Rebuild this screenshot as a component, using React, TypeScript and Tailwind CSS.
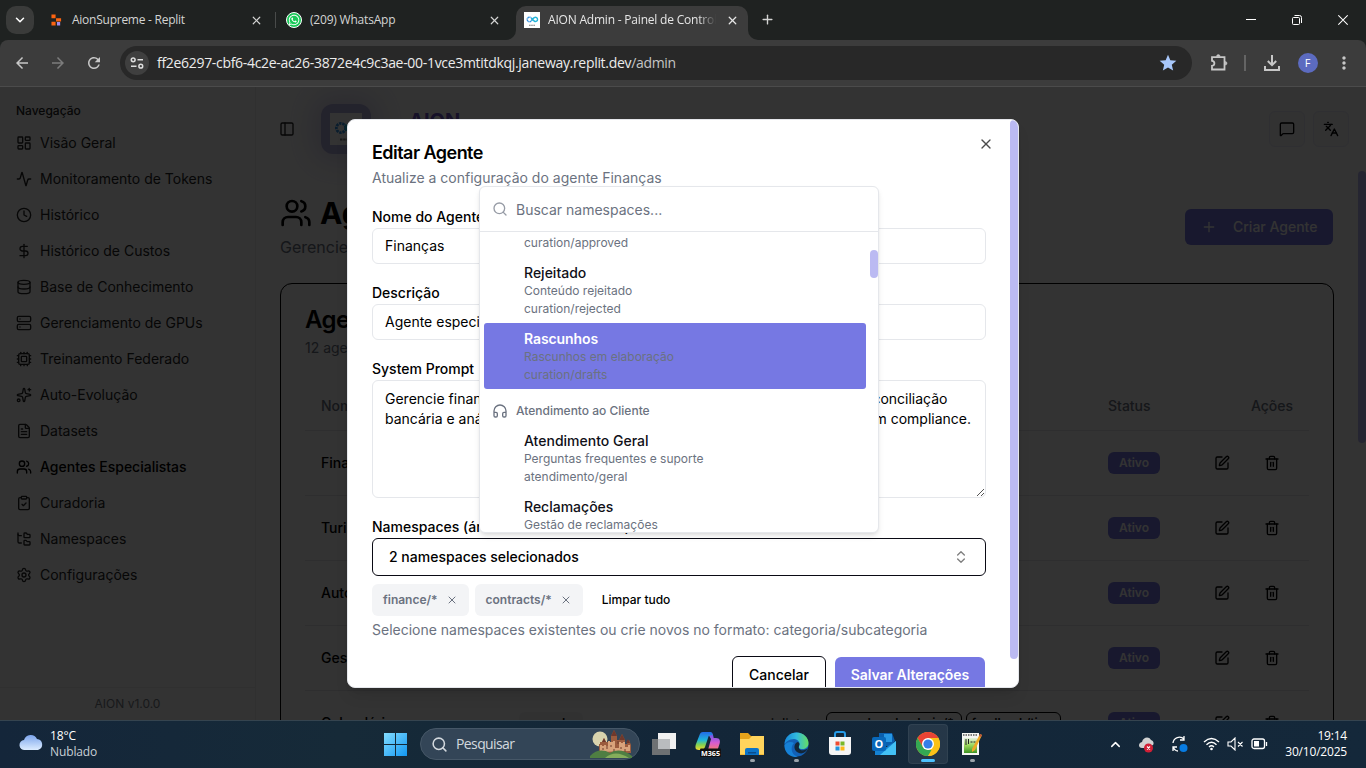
import React from "react";
import {
  Activity, ChevronDown, ChevronsUpDown, ChevronUp, ClipboardCheck, Clock, Cpu, Database, DollarSign,
  FileText, FolderTree, Headphones, Languages, LayoutDashboard, MessageSquare, PanelLeft, Plus, Search,
  Server, Settings, Sparkles, SquarePen, Trash2, Users, X,
} from "lucide-react";
import { FaWhatsapp } from "react-icons/fa";
import { MdArrowBack, MdArrowForward, MdRefresh, MdStar, MdMoreVert } from "react-icons/md";

const nav = [
  { icon: LayoutDashboard, label: "Visão Geral" },
  { icon: Activity, label: "Monitoramento de Tokens" },
  { icon: Clock, label: "Histórico" },
  { icon: DollarSign, label: "Histórico de Custos" },
  { icon: Database, label: "Base de Conhecimento" },
  { icon: Server, label: "Gerenciamento de GPUs" },
  { icon: Cpu, label: "Treinamento Federado" },
  { icon: Sparkles, label: "Auto-Evolução" },
  { icon: FileText, label: "Datasets" },
  { icon: Users, label: "Agentes Especialistas", active: true },
  { icon: ClipboardCheck, label: "Curadoria" },
  { icon: FolderTree, label: "Namespaces" },
  { icon: Settings, label: "Configurações" },
];

function AionMark({ className }: { className: string }) {
  return (
    <svg viewBox="0 0 32 32" className={className}>
      <rect width="32" height="32" fill="#fff" />
      <g fill="none" strokeWidth="2.8">
        <circle cx="11" cy="15" r="4.6" stroke="#2f8fe0" strokeDasharray="2.4 .8" />
        <path d="M15 12c3 2 3 5 6 6.500a4.200 4.200 0 1 0 0-7.500c-3 1-4 5-6 6.500" stroke="#25b5d8" />
      </g>
      <path d="M10 26.500h12" stroke="#777" strokeWidth="2.200" strokeDasharray="2.500 .7" />
    </svg>
  );
}

function TabStrip() {
  return (
    <div className="flex h-10 shrink-0 items-start bg-[#1f2221] text-[12px] text-[#d3d4d3]">
      <div className="ml-1.5 mt-1.5 flex h-7 w-7 items-center justify-center rounded-[10px] bg-[#3a3b3a]">
        <ChevronDown size={14} strokeWidth={2.6} className="text-white" />
      </div>
      <div className="ml-[17px] flex h-10 w-[224px] items-center">
        <svg viewBox="0 0 12 12" className="h-3 w-[11px]">
          <path d="M.5 0H5v4H.5zM5.500 4H11v3.500H5.500zM.5 8H5v4H.5z" fill="#fb6411" />
          <path d="M6.500 8.200H10V12H6.500z" fill="#9d8bea" />
        </svg>
        <span className="ml-[10px] tracking-[-0.25px]">AionSupreme - Replit</span>
        <X size={13} strokeWidth={2.2} className="ml-auto mr-[12px]" />
      </div>
      <div className="mt-3 h-4 w-px bg-[#494b4a]" />
      <div className="ml-[10px] flex h-10 w-[220px] items-center">
        <span className="flex h-4 w-4 items-center justify-center rounded-full border border-white bg-[#18c957] text-white">
          <FaWhatsapp size={12} />
        </span>
        <span className="ml-2 tracking-[-0.2px]">(209) WhatsApp</span>
        <X size={13} strokeWidth={2.2} className="ml-auto mr-[5px]" />
      </div>
      <div className="h-10 w-[10px] bg-[#3c3c3c]">
        <div className="h-10 w-full rounded-br-[10px] bg-[#1f2221]" />
      </div>
      <div className="h-10 w-[232px]">
        <div className="mt-1.5 flex h-[34px] items-center rounded-t-[10px] bg-[#3c3c3c] pb-[6px] pl-2 text-[#e6e6e6]">
          <AionMark className="h-4 w-4" />
          <span className="ml-2 w-[168px] overflow-hidden whitespace-nowrap tracking-[-0.2px] [mask-image:linear-gradient(to_right,black_150px,transparent_168px)]">
            AION Admin - Painel de Controle
          </span>
          <X size={13} strokeWidth={2.4} className="ml-[10px]" />
        </div>
      </div>
      <div className="h-10 w-[10px] bg-[#3c3c3c]">
        <div className="h-10 w-full rounded-bl-[10px] bg-[#1f2221]" />
      </div>
      <Plus size={15} strokeWidth={2.2} className="ml-[2px] mt-[12px]" />
      <div className="ml-auto mt-[14px] flex items-center gap-[36px] pr-[18px] text-white">
        <svg width="10" height="12"><path d="M0 5.500h10" stroke="#fff" /></svg>
        <svg width="10" height="12" fill="none" stroke="#fff">
          <rect x=".5" y="3.500" width="7" height="7" rx="1" />
          <path d="M2.500 1.500h5a2 2 0 0 1 2 2v5.500" />
        </svg>
        <svg width="10" height="12"><path d="M.3 1.300l9.400 9.400M9.700 1.300L.3 10.700" stroke="#fff" strokeWidth="1.200" /></svg>
      </div>
    </div>
  );
}

function Toolbar() {
  return (
    <div className="bg-[#1f2221]">
      <div className="flex h-[47px] items-center rounded-t-[8px] border-b border-[#4b4b4b] bg-[#3c3c3c] text-[#c7c7c7]">
        <div className="flex w-[120px] gap-[18px] pl-[13px]">
          <MdArrowBack size={18} />
          <MdArrowForward size={18} className="text-[#7c7c7c]" />
          <MdRefresh size={18} />
        </div>
        <div className="flex h-[34px] w-[1072px] items-center rounded-full bg-[#282828] pl-[5px] pr-[14px]">
          <div className="flex h-6 w-6 items-center justify-center rounded-full bg-[#3f3f3f]">
            <svg width="14" height="12" fill="none" stroke="#dedede" strokeWidth="1.500">
              <circle cx="3.200" cy="2.800" r="1.900" /><path d="M7.500 2.800H13M1 9.200h5.500" /><circle cx="10.800" cy="9.200" r="1.900" />
            </svg>
          </div>
          <span className="ml-2 whitespace-nowrap pb-[2px] text-[14px] tracking-[-0.31px] text-[#ececec]">
            ff2e6297-cbf6-4c2e-ac26-3872e4c9c3ae-00-1vce3mtitdkqj.janeway.replit.dev<span className="text-[#c5c5c5]">/admin</span>
          </span>
          <MdStar size={20} className="ml-auto text-[#a8c7fa]" />
        </div>
        <svg width="18" height="18" className="ml-[18px]" fill="none" stroke="currentColor" strokeWidth="1.800">
          <path d="M2 3.200h12.500v12.300H2v-3.700c3.200-.3 3.200-4.700 0-5z" />
          <path d="M6.500 2.400a1.800 1.800 0 0 1 3.600 0zM15.200 7.500a1.800 1.800 0 0 1 0 3.600z" fill="currentColor" strokeWidth=".5" />
        </svg>
        <div className="ml-[16px] h-4 w-[1.500px] bg-[#646464]" />
        <svg width="16" height="16" fill="none" stroke="currentColor" strokeWidth="2" className="ml-[18px]">
          <path d="M8 0v10M3.800 6L8 10.200 12.200 6M1 11v4h14v-4" />
        </svg>
        <div className="ml-[18px] flex h-5 w-5 items-center justify-center rounded-full bg-[#5c6bc0] text-[11px] text-white">F</div>
        <MdMoreVert size={20} className="ml-[16px]" />
      </div>
    </div>
  );
}

function Sidebar() {
  return (
    <div className="flex w-64 shrink-0 flex-col border-r border-[#ededed] bg-[#fdfdfd]">
      <div className="flex-1 pt-4">
        <div className="pl-4 text-[12px] leading-4 font-medium text-[#252525]">Navegação</div>
        <div className="mt-2 flex flex-col gap-1">
          {nav.map(({ icon: Icon, label, active }) => (
            <div key={label} className={active ? "flex h-8 items-center gap-2 pl-4 pb-px text-[14px] leading-5 font-medium text-black" : "flex h-8 items-center gap-2 pl-4 pb-px text-[14px] leading-5 text-[#252525]"}>
              <Icon size={16} />
              <span>{label}</span>
            </div>
          ))}
        </div>
      </div>
      <div className="flex h-[33px] items-center justify-center border-t border-[#ededed] text-[12px] text-[#777d88]">AION v1.0.0</div>
    </div>
  );
}

function Actions() {
  return (
    <div className="flex flex-1 items-center justify-end pr-3 text-black">
      <div className="flex w-[50px] justify-center"><SquarePen size={16} /></div>
      <div className="flex w-[50px] justify-center"><Trash2 size={16} /></div>
    </div>
  );
}

const agents = ["Finanças", "Turismo", "Automação", "Gestão", "Calendário"];

function Main() {
  return (
    <div className="flex min-w-0 flex-1 bg-[#fdfdfd]">
      <div className="min-w-0 flex-1 pl-6 pr-6">
        <div className="flex h-[84px] items-center">
          <PanelLeft size={16} className="ml-[-1px] text-[#202020]" />
          <div className="ml-[26px] flex h-[50px] w-[50px] items-center justify-center rounded-xl bg-[#b1aedb] shadow-[0_0_26px_8px_rgba(110,100,200,0.25)]">
            <AionMark className="h-8 w-8" />
          </div>
          <span className="ml-[38px] mt-[-16px] text-[20px] font-bold text-[#6e55c8]">AION</span>
          <div className="ml-auto mr-[-15px] flex gap-2 text-black">
            <div className="flex h-9 w-9 items-center justify-center rounded-md border border-[#ebebf7] bg-[#f7f7fb]"><MessageSquare size={16} /></div>
            <div className="flex h-9 w-9 items-center justify-center rounded-md border border-[#ebebf7] bg-[#f7f7fb]"><Languages size={16} /></div>
          </div>
        </div>
        <div className="mt-[22px] flex items-center">
          <div>
            <div className="flex h-10 items-center gap-2 text-[30px] leading-9 font-bold text-black">
              <Users size={32} /> Agentes Especialistas
            </div>
            <div className="mt-0.5 mb-0.5 text-[16px] leading-6 text-[#6b7280]">Gerencie os agentes especializados</div>
          </div>
          <div className="ml-auto mr-px mb-px flex h-9 w-[148px] items-center rounded-md bg-[#7778e3] pl-4 text-[14px] font-medium text-white">
            <Plus size={16} /><span className="ml-4">Criar Agente</span>
          </div>
        </div>
        <div className="mt-[22px] h-[700px] rounded-xl border border-black px-6 pt-6">
          <div className="text-[24px] leading-6 font-semibold tracking-tight text-black">Agentes Disponíveis</div>
          <div className="mt-1.5 text-[14px] leading-5 text-[#6b7280]">12 agentes cadastrados</div>
          <div className="mt-6 flex h-[49px] items-center border-b border-[#e5e7eb] px-4 pb-px text-[14px] leading-5 font-medium text-[#6b7280]">
            <span className="w-[787px]">Nome</span><span>Status</span><span className="ml-auto">Ações</span>
          </div>
          {agents.map((name, i) => (
            <div key={name} className="flex h-[65px] items-center border-b border-[#e5e7eb] pl-4 text-[14px] font-medium text-black">
              <span className="w-[198px] shrink-0 pb-px leading-5">{name}</span>
              <div className="flex w-[589px] shrink-0 items-center gap-1 text-[12px] font-semibold">
                {i === 4 && (
                  <>
                    <span className="flex h-[22px] w-[64px] items-center rounded-md bg-[#f3f4f6] px-2.5">agenda</span>
                    <span className="ml-[132px] w-[101px] text-center text-[14px] font-normal">especialista</span>
                    <span className="ml-0.5 flex h-[22px] w-[136px] shrink-0 items-center justify-center rounded-md border border-black">agenda.calendario/*</span>
                    <span className="flex h-[22px] w-[95px] shrink-0 items-center justify-center rounded-md border border-black">feedback/time</span>
                  </>
                )}
              </div>
              <span className="flex h-[22px] w-[52px] shrink-0 items-center justify-center rounded-md bg-[#7778e3] text-[12px] font-semibold text-white">Ativo</span>
              <Actions />
            </div>
          ))}
        </div>
      </div>
      <div className="w-2 pt-[84px]"><div className="h-[272px] rounded-full bg-[#bbbaf2]" /></div>
    </div>
  );
}

function Field({ label, value }: { label: string; value: string }) {
  return (
    <div>
      <div className="text-[14px] leading-[14px] font-medium">{label}</div>
      <div className="mt-1 flex h-9 items-center rounded-md border border-[#e5e7eb] px-3 pb-px text-[14px] leading-5">{value}</div>
    </div>
  );
}

function Chip({ text }: { text: string }) {
  return (
    <span className="flex h-8 items-center rounded-md bg-[#f3f4f6] pl-[11px] pr-[11px] text-[12px] font-semibold text-[#6b7280]">
      {text}<X size={12} className="ml-2" />
    </span>
  );
}

function Option({ title, text, path, active }: { title: string; text: string; path: string; active?: boolean }) {
  return (
    <div className={active ? "h-[66px] shrink-0 rounded-[3px] bg-[#7678e3] py-1.5 pl-10 text-[12px] leading-4 text-[#6b7280]" : "h-[66px] shrink-0 rounded-[3px] py-1.5 pl-10 text-[12px] leading-4 text-[#6b7280]"}>
      <div className={active ? "text-[14px] leading-5 font-semibold tracking-[-0.1px] text-white" : "text-[14px] leading-5 font-medium text-[#101018]"}>{title}</div>
      <div>{text}</div>
      <div className="mt-0.5">{path}</div>
    </div>
  );
}

function NamespacePopover() {
  return (
    <div className="absolute left-[479px] top-[99px] flex h-[347px] w-[400px] flex-col overflow-hidden rounded-md border border-[#e5e7eb] bg-white shadow-md">
      <div className="flex h-[45px] shrink-0 items-center border-b border-[#e5e7eb] pl-3 pt-px text-[14px] text-[#6b7280]">
        <Search size={16} className="mr-2 mt-[-2px] opacity-70" />Buscar namespaces...
      </div>
      <div className="flex min-h-0 flex-1 overflow-hidden">
        <div className="flex min-w-0 flex-1 flex-col px-1">
          <div className="mt-[-41px] flex flex-col">
            <Option title="Aprovado" text="Conteúdo aprovado" path="curation/approved" />
            <Option title="Rejeitado" text="Conteúdo rejeitado" path="curation/rejected" />
            <Option title="Rascunhos" text="Rascunhos em elaboração" path="curation/drafts" active />
            <div className="mt-2 flex h-7 items-center gap-2 pl-2 text-[12px] font-medium text-[#6b7280]">
              <Headphones size={16} />Atendimento ao Cliente
            </div>
            <Option title="Atendimento Geral" text="Perguntas frequentes e suporte" path="atendimento/geral" />
            <Option title="Reclamações" text="Gestão de reclamações" path="atendimento/reclamacoes" />
          </div>
        </div>
        <div className="w-2 pt-[18px]"><div className="h-7 rounded-full bg-[#bbbaf2]" /></div>
      </div>
    </div>
  );
}

function EditDialog() {
  return (
    <div className="absolute left-[347px] top-[32px] flex h-[569px] w-[672px] overflow-hidden rounded-lg border border-[#e5e7eb] bg-white text-black shadow-lg">
      <div className="min-w-0 flex-1 px-6 pt-6">
        <div className="text-[18px] leading-[18px] font-semibold tracking-[-0.54px]">Editar Agente</div>
        <div className="mt-1.5 text-[14px] leading-5 text-[#6b7280]">Atualize a configuração do agente Finanças</div>
        <div className="mt-[22px] flex flex-col gap-[22px]">
          <Field label="Nome do Agente" value="Finanças" />
          <Field label="Descrição" value="Agente especializado em finanças" />
          <div>
            <div className="text-[14px] leading-[14px] font-medium">System Prompt</div>
            <div className="relative mt-1 flex h-[118px] justify-between rounded-md border border-[#e5e7eb] px-3 py-2 text-[14px] leading-5">
              <div>Gerencie finanças,<br />bancária e análise</div>
              <div className="pr-[2px]"><div className="ml-[-6px]">e conciliação</div><div>em compliance.</div></div>
              <svg width="9" height="9" className="absolute right-0 bottom-0" stroke="#555" strokeWidth="1"><path d="M1 8L8 1M5 8l3-3" /></svg>
            </div>
          </div>
          <div>
            <div className="text-[14px] leading-[14px] font-medium">Namespaces (áreas de conhecimento)</div>
            <div className="mt-1 flex h-[38px] items-center justify-between rounded-md border border-[#0a0a14] px-4 text-[14px] leading-5 font-medium">
              <span>2 namespaces selecionados</span><ChevronsUpDown size={16} className="opacity-50" />
            </div>
            <div className="mt-2 flex items-center gap-1.5 text-[12px] font-medium">
              <Chip text="finance/*" /><Chip text="contracts/*" /><span className="ml-[13px]">Limpar tudo</span>
            </div>
            <div className="mt-1 text-[14px] leading-5 text-[#6b7280]">Selecione namespaces existentes ou crie novos no formato: categoria/subcategoria</div>
          </div>
        </div>
        <div className="mt-4 flex justify-end gap-[9px] text-[14px] leading-5 font-medium">
          <div className="flex h-[38px] w-[94px] items-center justify-center rounded-md border border-[#0a0a14]">Cancelar</div>
          <div className="mr-px mt-px flex h-9 w-[150px] items-center justify-center rounded-md bg-[#7678e3] font-semibold tracking-[-0.06px] text-white">Salvar Alterações</div>
        </div>
      </div>
      <X size={16} className="absolute right-[24px] top-4 opacity-70" />
      <div className="w-2"><div className="h-[539px] rounded-full bg-[#bbbaf2]" /></div>
    </div>
  );
}

function AppIcon({ children, mark }: { children: React.ReactNode; mark?: "idle" | "active" }) {
  return (
    <div className={mark === "active" ? "relative flex h-10 w-10 items-center justify-center rounded-[4px] border border-white/5 bg-white/8" : "relative flex h-10 w-10 items-center justify-center"}>
      {children}
      {mark === "idle" && <div className="absolute bottom-0.5 h-[3px] w-[5px] rounded-full bg-[#9aa3ab]" />}
      {mark === "active" && <div className="absolute bottom-px h-[3px] w-3.5 rounded-full bg-[#4cc2ff]" />}
    </div>
  );
}

function Castle() {
  return (
    <svg width="43" height="28" viewBox="0 0 43 28">
      <circle cx="10" cy="9" r="7.500" fill="#d9d3ad" />
      <path d="M9 23v-9h1v-2h2l2-4 2 4h2v1h3V6l3-6 3 6v4h2l3-6 3 6v4h2l2-4 2 5v8z" fill="#9b5c3e" />
      <path d="M10 22v-7h2v1h2v-1h2v1h2v-5h2v1h3v-1h2v7h4v-6h2v1h2v-1h2v5h3v-2h2v6z" fill="#d8a37b" />
      <path d="M12 12l2-4 2 4zM21 6l3-6 3 6zM29 10l3-6 3 6zM36 13l2-4 2 4z" fill="#6f382b" />
      <path d="M13 18v2m4-4v3m4-4v2m3 2v3m4-11v3m3 3v2m4 0v3" stroke="#6f3d2d" />
      <path d="M0 26q9-9 20-3 10-6 22 3v2H0z" fill="#4f7e42" />
      <path d="M15 28q10-9 24 0z" fill="#85ad5b" />
    </svg>
  );
}

function Taskbar() {
  return (
    <div className="relative flex h-12 shrink-0 items-center border-t border-[#35444f] bg-[linear-gradient(90deg,#14263a,#162a38_25%,#132638_50%,#14283a)] text-[12px] text-white">
      <svg width="25" height="17" viewBox="0 0 25 17" className="ml-[19px] mt-[-4px]">
        <defs><linearGradient id="cl" y2="1" x2="0"><stop stopColor="#7ca5ec" /><stop offset="1" stopColor="#dcecff" /></linearGradient></defs>
        <path d="M6 16a5 5 0 0 1-1-10 7 7 0 0 1 13-1 5.600 5.600 0 0 1 1 11z" fill="url(#cl)" />
      </svg>
      <div className="ml-[6px] mt-[-1px] w-[334px] leading-4 tracking-[-0.12px]"><div>18°C</div><div className="text-[#c8d0d6]">Nublado</div></div>
      <svg width="23" height="23" viewBox="0 0 23 23">
        <defs><linearGradient id="win" x2="1" y2="1"><stop stopColor="#83dcff" /><stop offset="1" stopColor="#1297f2" /></linearGradient></defs>
        <path d="M0 0h11v11H0zM12 0h11v11H12zM0 12h11v11H0zM12 12h11v11H12z" fill="url(#win)" />
      </svg>
      <div className="ml-[13px] mt-[-1px] flex h-8 w-[220px] items-center rounded-full border border-[#465767] bg-[#334557] pl-[10px] pr-[6px] text-[14px] text-[#d3d9de]">
        <Search size={17} strokeWidth={2.2} /><span className="ml-[8px] pb-0.5 tracking-[-0.6px]">Pesquisar</span><span className="ml-auto"><Castle /></span>
      </div>
      <div className="ml-1 mt-[-1px] flex gap-1">
        <AppIcon>
          <svg width="24" height="22"><path d="M6 0h18v16H6z" fill="#f1f1f1" /><path d="M0 6h18v16H0z" fill="#6e7173" /><path d="M6 6h12v10H6z" fill="#b9bcbe" /></svg>
        </AppIcon>
        <AppIcon>
          <svg width="26" height="26" viewBox="0 0 26 26">
            <defs>
              <linearGradient id="co1" x2="0" y2="1"><stop stopColor="#226be8" /><stop offset=".45" stopColor="#1fb6d9" /><stop offset=".7" stopColor="#80cf54" /><stop offset="1" stopColor="#f2d82c" /></linearGradient>
              <linearGradient id="co2" x2="0" y2="1"><stop stopColor="#2468df" /><stop offset=".25" stopColor="#835ae6" /><stop offset=".6" stopColor="#d85cd1" /><stop offset="1" stopColor="#f77a70" /></linearGradient>
            </defs>
            <path d="M12 1h3c2.500 0 3 2 3.700 6H21c4 0 4.500 3 3.500 6l-2 6H13l3-11z" fill="url(#co2)" />
            <path d="M8 1h6.500c2 0 2.500 1 3 3H16c-2 0-2.500 1-3 3L10 16c-.8 2-2 3-4 3H4c-4 0-4-3-3-6L4.500 4c.7-2 1.500-3 3.500-3z" fill="url(#co1)" />
            <rect x="5" y="17.500" width="21" height="8.500" rx="1" fill="#111" />
            <text x="15.500" y="24.500" textAnchor="middle" fontSize="7.200" fontWeight="700" fill="#fff" fontFamily="Open Sans, sans-serif">M365</text>
          </svg>
        </AppIcon>
        <AppIcon mark="idle">
          <svg width="26" height="24"><path d="M1 1h8l3 3h12l1 2v17H1z" fill="#e5a31b" /><path d="M1 7h9l3-3h12v18.500H1z" fill="#ffd45c" /><path d="M6 23v-5q0-2 2-2h10q2 0 2 2v5z" fill="#0b74c9" /><path d="M9 20h8v1.500H9z" fill="#0a4d8d" /></svg>
        </AppIcon>
        <AppIcon mark="idle">
          <svg width="25" height="25" viewBox="0 0 25 25">
            <defs><linearGradient id="ed" x2="1"><stop stopColor="#1686d9" /><stop offset=".5" stopColor="#31b9dd" /><stop offset="1" stopColor="#66dd62" /></linearGradient></defs>
            <circle cx="12.500" cy="12.500" r="12" fill="#1260b6" />
            <path d="M.5 12C1 5 6 .5 12.500.5 20 .5 24.500 6 24.500 11c0 4-3 6-6 6-4 0-4.500-2-3.500-3 2-3-1-7-5-7-5 0-8 3-9.500 5z" fill="url(#ed)" />
            <path d="M15 14c-1 3 2 5 5 4 2-.5 3-1 4-2-2 5-7 7-11 4-4-3-3-9 1-10 2 1 1.500 3 1 4z" fill="#132638" />
            <path d="M10 11c-4 4-3 12 4 14C7 26 0 21 .5 13 3 10 7 9 10 11z" fill="#1681d7" />
          </svg>
        </AppIcon>
        <AppIcon>
          <svg width="24" height="26"><path d="M6 7V3q0-2 2-2h6q2 0 2 2v4" fill="none" stroke="#269be7" strokeWidth="2" transform="translate(1)" /><path d="M1 6h22v15q0 3-3 3H4q-3 0-3-3z" fill="#f5f5f5" /><path d="M7.500 10.500h4v4h-4z" fill="#ef4c31" /><path d="M12.500 10.500h4v4h-4z" fill="#79b829" /><path d="M7.500 15.500h4v4h-4z" fill="#2294dc" /><path d="M12.500 15.500h4v4h-4z" fill="#fcb919" /></svg>
        </AppIcon>
        <AppIcon>
          <svg width="26" height="24"><path d="M8 1h13l3 8-5 5H8z" fill="#0a5fae" /><path d="M13 2h8v8h-8z" fill="#2797e3" /><path d="M4 10l10 6 11-7v13q0 1-1 1H4z" fill="#1582d3" /><path d="M25 9v13q0 1-1 1H9z" fill="#43c1f5" /><rect x="1" y="5" width="14" height="14" rx="2" fill="#0868ba" /><text x="8" y="16" textAnchor="middle" fontSize="11" fontWeight="700" fill="#fff" fontFamily="Open Sans, sans-serif">O</text></svg>
        </AppIcon>
        <AppIcon mark="active">
          <svg width="24" height="24" viewBox="0 0 24 24"><circle cx="12" cy="12" r="12" fill="#fbc118" /><path d="M1.600 6A12 12 0 0 1 22.400 6H12v6L6.800 15z" fill="#e94335" /><path d="M1.600 6L6.800 15 12 18h5.200L12 24A12 12 0 0 1 1.600 6z" fill="#34a853" /><path d="M17.200 15L12 24A12 12 0 0 0 22.400 6H12z" fill="#fbc118" /><circle cx="12" cy="12" r="6" fill="#fff" /><circle cx="12" cy="12" r="4.600" fill="#357ee8" /></svg>
        </AppIcon>
        <AppIcon mark="idle">
          <svg width="24" height="24">
            <defs><linearGradient id="np" x2="0" y2="1"><stop stopColor="#e4f1dc" /><stop offset=".5" stopColor="#98d659" /><stop offset="1" stopColor="#3d9426" /></linearGradient></defs>
            <path d="M2 1h17v22H2z" fill="#f5f7f3" /><path d="M4 6h13v15H4z" fill="url(#np)" />
            <path d="M3 3h14" stroke="#555" strokeWidth="1.500" strokeDasharray="1.500 1" />
            <path d="M6 7v6M8.500 7v5m2-2h2m1 0h2" stroke="#222" />
            <path d="M20 2l2 1-7 15-3 2v-3z" fill="#edaa27" /><path d="M20 2l2 1-1 2-2-1z" fill="#bd543d" />
          </svg>
        </AppIcon>
      </div>
      <ChevronUp size={15} strokeWidth={2.3} className="ml-[116px] mt-[-1px]" />
      <svg width="18" height="18" className="ml-[15px]"><path d="M4 12C0 12 0 7 4 6c1-5 7-6 9-2 3 1 3 4 2 5L9 12z" fill="#d2d2d2" /><circle cx="10.500" cy="12" r="4.500" fill="#d11f35" /><path d="M9 10.500l3 3m0-3l-3 3" stroke="#fff" strokeWidth="1.100" /></svg>
      <svg width="18" height="18" className="ml-[15px] mt-[-2px]" fill="none" stroke="#fff" strokeWidth="1.300"><path d="M2 8a6.500 6.500 0 0 1 11-4m0-3v4H9M2 16v-4h4m-4 0q2 4 5 4" /><circle cx="12.500" cy="13" r="4" fill="#087ce2" stroke="none" /></svg>
      <svg width="17" height="14" className="ml-[14px] mt-[-2px]" fill="none" stroke="#fff" strokeWidth="1.400"><path d="M1 5q7.500-7 15 0M3.500 7.700q5-5 10 0M6 10q2.500-2.300 5 0" /><circle cx="8.500" cy="12" r="1.300" fill="#fff" stroke="none" /></svg>
      <svg width="17" height="14" className="ml-[7px] mt-[-2px]" fill="none" stroke="#fff" strokeWidth="1.100"><path d="M1 5h3l4-4v12L4 9H1zM11 5l4.500 4.500m0-4.500L11 9.500" /></svg>
      <svg width="17" height="12" className="ml-[7px] mt-[-2px]" fill="none" stroke="#fff" strokeWidth="1.300"><rect x="1" y="1" width="12.500" height="9.500" rx="2" /><path d="M15.500 4v4" /><path d="M3 3h5v5.500H3z" fill="#fff" stroke="none" /></svg>
      <div className="ml-auto mt-[-2px] pr-[19px] text-right leading-4 tracking-[-0.2px]"><div>19:14</div><div>30/10/2025</div></div>
    </div>
  );
}

export default function App() {
  return (
    <div className="flex h-[768px] w-[1366px] flex-col overflow-hidden font-['Open_Sans',sans-serif]">
      <TabStrip />
      <Toolbar />
      <div className="relative min-h-0 flex-1 overflow-hidden font-['Inter',sans-serif]">
        <div className="flex h-full overflow-hidden"><Sidebar /><Main /></div>
        <div className="absolute inset-0 bg-black/80" />
        <EditDialog />
        <NamespacePopover />
      </div>
      <Taskbar />
    </div>
  );
}
